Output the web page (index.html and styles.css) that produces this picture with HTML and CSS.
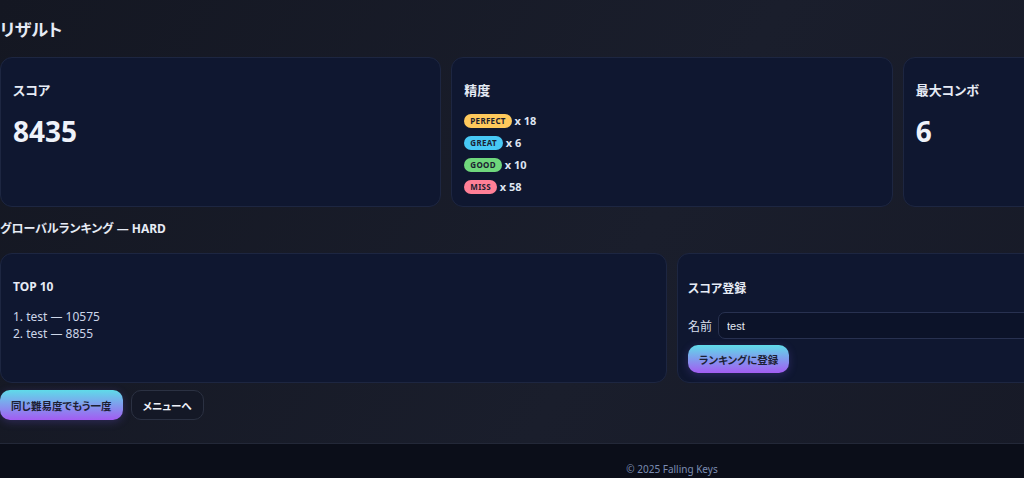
FILE: index.html
```html
<!DOCTYPE html>
<html lang="ja">
<head>
    <meta charset="UTF-8">
    <meta name="viewport" content="width=device-width, initial-scale=1.0">
    <title>Falling Keys - リザルト</title>
    <link rel="stylesheet" href="styles.css">
</head>
<body>
    <div class="page">
        <main class="result">
            <h2 class="page-title">リザルト</h2>

            <div class="stats">
                <div class="card">
                    <h3>スコア</h3>
                    <div class="stat-value">8435</div>
                </div>
                <div class="card">
                    <h3>精度</h3>
                    <div class="judges">
                        <div class="judge"><span class="badge perfect">PERFECT</span> x 18</div>
                        <div class="judge"><span class="badge great">GREAT</span> x 6</div>
                        <div class="judge"><span class="badge good">GOOD</span> x 10</div>
                        <div class="judge"><span class="badge miss">MISS</span> x 58</div>
                    </div>
                </div>
                <div class="card">
                    <h3>最大コンボ</h3>
                    <div class="stat-value">6</div>
                </div>
            </div>

            <h3 class="section-title">グローバルランキング — HARD</h3>

            <div class="ranking">
                <div class="card">
                    <h4>TOP 10</h4>
                    <ol class="top-list">
                        <li>test — 10575</li>
                        <li>test — 8855</li>
                    </ol>
                </div>
                <div class="card register">
                    <h4>スコア登録</h4>
                    <div class="form-row">
                        <label for="playerName">名前</label>
                        <input id="playerName" type="text" value="test">
                    </div>
                    <button class="btn btn-primary btn-small">ランキングに登録</button>
                </div>
            </div>

            <div class="actions">
                <button class="btn btn-primary">同じ難易度でもう一度</button>
                <button class="btn btn-ghost">メニューへ</button>
            </div>
        </main>

        <footer class="footer">© 2025 Falling Keys</footer>
    </div>
</body>
</html>
```

FILE: styles.css
```css
body {
    font-family: "Noto Sans", "Noto Sans CJK JP", sans-serif;
    font-feature-settings: "palt";
    background: linear-gradient(120deg, #141722 0%, #1a1e2c 60%, #171a27 100%);
    color: #e6ebf5;
    margin: 0;
    overflow: hidden;
}
.page { width: 1344px; }
.result { padding: 18px 0 23px; }

.page-title { font-size: 17px; line-height: 24px; margin: 0 0 15px; font-weight: 700; }

.card {
    background: #0f1730;
    border: 1px solid #1d2641;
    border-radius: 12px;
    padding: 16px 12px 8px;
    box-sizing: border-box;
}
.card h3 { font-size: 13px; line-height: 16px; margin: 8px 0 0; font-weight: 700; }
.card h4 { font-size: 12px; line-height: 18px; margin: 8px 0 0; font-weight: 700; }

.stats { display: grid; grid-template-columns: repeat(3, 1fr); gap: 10px; }
.stats .card { height: 150px; }
.stat-value { font-size: 28px; line-height: 34px; font-weight: 700; margin-top: 16px; color: #eef2fa; }

.judges { margin-top: 12px; }
.judge { font-size: 11px; line-height: 22px; font-weight: 700; color: #dfe5f2; }
.badge {
    display: inline-block;
    font-size: 8px;
    line-height: 14px;
    padding: 0 6px;
    border-radius: 8px;
    color: #1b2030;
    letter-spacing: 0.3px;
    vertical-align: 1px;
}
.perfect { background: #ffc95c; }
.great { background: #47c8f5; }
.good { background: #6fd77c; }
.miss { background: #ff7f96; }

.section-title { font-size: 12px; line-height: 18px; margin: 13px 0 15px; font-weight: 700; }

.ranking { display: grid; grid-template-columns: 1fr 1fr; gap: 10px; }
.ranking .card { height: 130px; }
.top-list {
    list-style: decimal inside;
    margin: 12px 0 0;
    padding: 0;
    font-size: 12px;
    line-height: 17px;
    color: #cdd6e8;
}

.register { padding: 18px 10px 8px; }
.form-row { display: flex; align-items: center; gap: 6px; margin-top: 14px; }
.form-row label { font-size: 12px; color: #d7deec; }
.form-row input {
    flex: 1;
    height: 27px;
    box-sizing: border-box;
    background: #0c1329;
    border: 1px solid #283150;
    border-radius: 7px;
    color: #e6ebf5;
    font-family: "Liberation Sans", sans-serif;
    font-size: 11px;
    padding: 0 8px;
}

.btn {
    font-family: inherit;
    font-feature-settings: "palt";
    font-weight: 700;
    font-size: 10.5px;
    height: 30px;
    padding: 0 11px;
    border-radius: 10px;
    cursor: pointer;
}
.btn-primary {
    background: linear-gradient(180deg, #5fdbe9 0%, #a35cf2 100%);
    color: #1c1f33;
    border: none;
    box-shadow: 0 2px 8px rgba(120, 90, 240, 0.25);
}
.btn-small { height: 28px; margin-top: 6px; padding: 0 11px; }
.btn-ghost {
    background: #141826;
    color: #eef1f8;
    border: 1px solid #2b3142;
}

.actions { display: flex; gap: 8px; margin-top: 7px; }

.footer {
    border-top: 1px solid #232838;
    background: #0b0e19;
    color: #7c8db2;
    font-size: 10px;
    line-height: 14px;
    text-align: center;
    padding: 18px 0 12px;
}
```
